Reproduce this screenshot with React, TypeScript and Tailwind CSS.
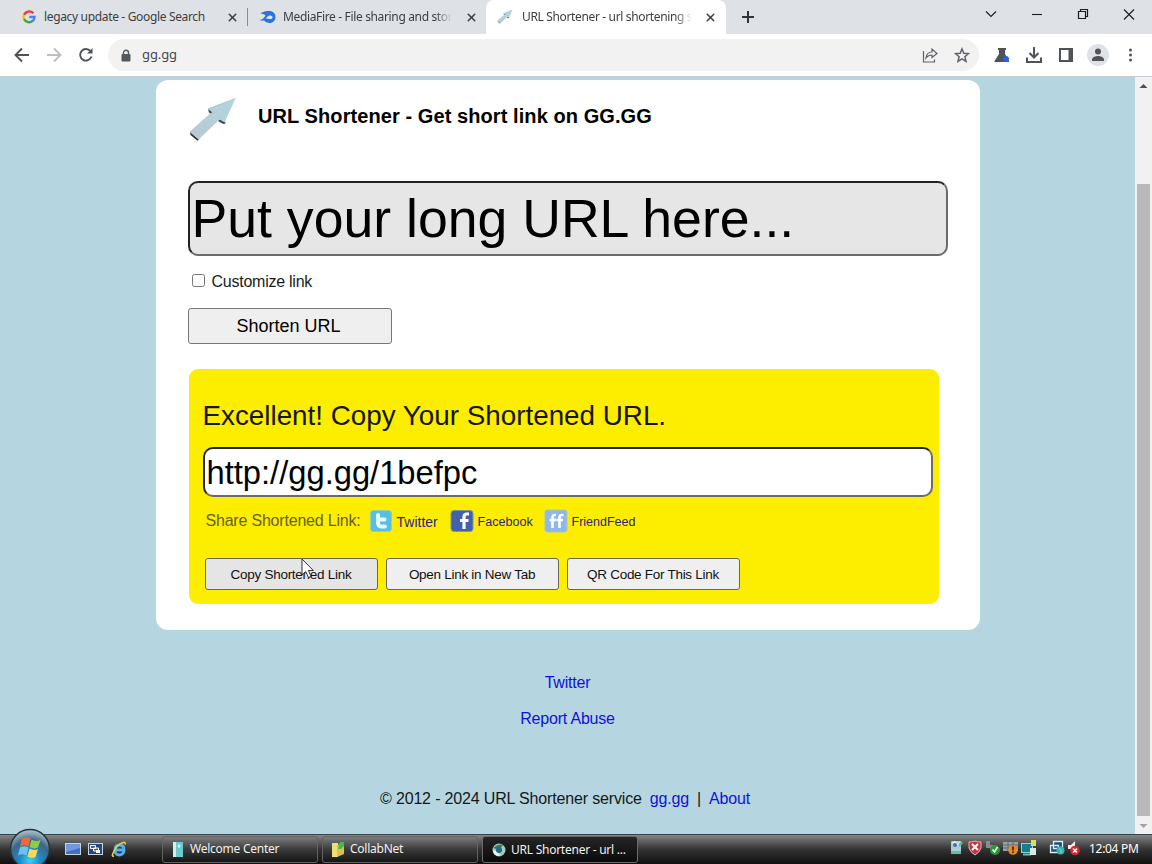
import type { ReactNode } from "react";
import { X } from "lucide-react";

//Google favicon
const GoogleIcon = () => (
  <svg width="14" height="14" viewBox="0 0 48 48" fill="none" strokeWidth="8">
    <path d="M39 11.500A19 19 0 0 0 7 17" stroke="#ea4335" />
    <path d="M7 16A19 19 0 0 0 7 32" stroke="#fbbc05" />
    <path d="M7 31A19 19 0 0 0 37 37" stroke="#34a853" />
    <path d="M36 38A19 19 0 0 0 43 24H25" stroke="#4285f4" />
  </svg>
);

const MediaFireIcon = () => (
  <svg width="17" height="14" viewBox="0 0 17 14">
    <path
      d="M1.500 3.500C4 1.500 7 1 10 1c4 0 6.500 2.500 6.500 6S14 13 10.500 13C8 13 6.500 12 5 10.500c-1.500.3-3 .2-4.500-.8 1.500 0 2.500-.3 3.500-1C5 8 5.500 7 6.500 5.500 5 4 3 3.800 1.500 3.500z"
      fill="#2a74dc"
    />
    <path d="M6.500 8.200c1.500 0 2-2.700 4.700-2.700 1.500 0 2.300.8 2.300 1.700s-.8 1.800-2.300 1.800C9 9 8 8.700 6.500 8.200z" fill="#dee9f8" />
  </svg>
);

const ArrowLogo = ({ size }: { size: number }) => (
  <svg width={size} height={size} viewBox="0 0 49 49">
    <defs>
      <linearGradient id="arrow" x1="0" y1="1" x2="1" y2="0">
        <stop offset="0" stopColor="#b9c9d3" />
        <stop offset="1" stopColor="#b0d6de" />
      </linearGradient>
    </defs>
    <path d="M2 36l9 7.500-1.500 1.200L2.500 39z" fill="#303336" />
    <path d="M20 13l1 3.500 3.500 2.500 1-2zM30 25l5.500 3 2-.5-.5-2.500-5-2z" fill="#3b4146" />
    <path d="M47.500 2.500L20 12.800l4.500 3.200L2 36l8.700 7.500L31.500 23.500l5 3z" fill="url(#arrow)" />
    <path d="M47.500 2.500L20 12.800l4.500 3.200L2 36" fill="none" stroke="#a4b9c4" strokeWidth="0.700" />
  </svg>
);

type TabProps = {
  icon: ReactNode;
  title: string;
  className: string;
  textClass: string;
};

const Tab = ({ icon, title, className, textClass }: TabProps) => (
  <div className={`flex h-[34px] items-center ${className}`}>
    <span className="flex w-[17px] shrink-0 justify-center">{icon}</span>
    <span className={`whitespace-nowrap text-[12px] text-[#3c4043] ${textClass}`}>{title}</span>
    <X className="ml-auto shrink-0 text-[#3c4043]" size={13} strokeWidth={2.8} />
  </div>
);

const TabStrip = () => (
  <div className="flex h-[34px] bg-[#dee1e6] font-['Noto_Sans',sans-serif]">
    <Tab
      icon={<GoogleIcon />}
      title="legacy update - Google Search"
      className="w-[219px] ml-[20px]"
      textClass="ml-[7px] tracking-[-0.34px]"
    />
    <div className="mt-[8px] ml-[8px] h-[18px] w-px bg-[#888c91]" />
    <Tab
      icon={<MediaFireIcon />}
      title="MediaFire - File sharing and stor"
      className="w-[219px] ml-[11px]"
      textClass="ml-[7px] tracking-[-0.35px] mask-r-from-90%"
    />
    <div className="ml-[8px] h-[34px] w-[240px] rounded-t-[8px] bg-white pl-[10px]">
      <Tab
        icon={<ArrowLogo size={16} />}
        title="URL Shortener - url shortening s"
        className="w-[221px]"
        textClass="ml-[9px] tracking-[-0.35px] mask-r-from-90%"
      />
    </div>
    <svg className="mt-[10px] ml-[15px]" width="14" height="14" stroke="#303438" strokeWidth="2">
      <path d="M7 1v12M1 7h12" />
    </svg>
    {/* Window controls */}
    <svg className="ml-auto" width="180" height="34" fill="none" stroke="#1b1b1b" strokeWidth="1.100">
      <path d="M14 11.500l5 5 5-5" />
      <path d="M60 14.500h10" />
      <path d="M106.500 11.500h7v7h-7zM108.500 11.500v-2h7v7h-2" strokeWidth="1.200" />
      <path d="M152 9.500l10 10M162 9.500l-10 10" />
    </svg>
  </div>
);

const Toolbar = () => (
  <div className="flex h-[43px] items-center border-b border-[#c3cdd4] bg-white">
    <svg className="shrink-0" width="108" height="42" fill="none" stroke="#505356" strokeWidth="1.900">
      <path d="M29 21H16M22 14.500L15.500 21l6.500 6.500" />
      <path d="M47 21h13M54 14.500l6.500 6.500-6.500 6.500" stroke="#bdbec0" />
      <path d="M90.500 17.200a5.800 5.800 0 1 0 1 5.300" />
      <path d="M92.500 14v5.500H87z" fill="#505356" stroke="none" />
    </svg>
    <div className="flex h-[32px] w-[871px] items-center rounded-full bg-[#f2f2f3] pl-[13px]">
      <svg width="10" height="13">
        <rect x="0.500" y="5" width="9" height="7.500" rx="1" fill="#55585b" />
        <path d="M2.500 5.500V3.700a2.500 2.500 0 0 1 5 0v1.800" fill="none" stroke="#55585b" strokeWidth="1.400" />
      </svg>
      <span className="ml-[11px] font-['Noto_Sans',sans-serif] text-[13px] tracking-[-0.1px] text-[#45484b]">gg.gg</span>
      <svg className="ml-auto mr-[5px]" width="54" height="20" fill="none" stroke="#5f6368" strokeWidth="1.400">
        <path d="M3.500 6v11h11v-2.500M6 13c.5-4 3-6 6-6V4l5 4.500-5 4V10c-3 0-4.500 1-6 3z" strokeWidth="1.200" />
        <path
          d="M42 4l1.800 4.300 4.600.4-3.500 3 1.100 4.600-4-2.500-4 2.500 1.100-4.600-3.500-3 4.600-.4z"
          strokeWidth="1.500"
        />
      </svg>
    </div>
    <svg className="ml-[7px] shrink-0" width="160" height="42" fill="none" stroke="#505356" strokeWidth="2">
      <path d="M12 14h8v2h-1v4l4 7v1H8.500v-1l4.500-7v-4h-1z" fill="#505356" stroke="none" />
      <circle cx="20" cy="25" r="3" fill="#2463eb" stroke="none" />
      <path d="M48 13v10M43.500 19l4.500 4.500 4.500-4.500M41 23.500V28h14v-4.500" />
      <path d="M74 15h12v12H74z" />
      <path d="M84 15v12" strokeWidth="3" />
      <circle cx="112" cy="21" r="11" fill="#dfe2e7" stroke="none" />
      <circle cx="112" cy="17.500" r="3" fill="#505356" stroke="none" />
      <path d="M106 27v-1.500c0-2.500 4-3.500 6-3.500s6 1 6 3.500V27z" fill="#505356" stroke="none" />
      <g fill="#505356" stroke="none">
        <circle cx="144.500" cy="16" r="1.500" />
        <circle cx="144.500" cy="21" r="1.500" />
        <circle cx="144.500" cy="26" r="1.500" />
      </g>
    </svg>
  </div>
);

type ShareProps = { icon: ReactNode; label: string; className: string };

const ShareLink = ({ icon, label, className }: ShareProps) => (
  <a className={`flex items-center text-[#33208c] ${className}`}>
    {icon}
    <span className="ml-[4px] pt-[2px] whitespace-nowrap">{label}</span>
  </a>
);

const ShareRow = () => (
  <div className="mt-[12px] flex h-[24px] items-center pl-[3px]">
    <span className="w-[163px] whitespace-nowrap text-[16px] tracking-[-0.2px] text-[#685f18]">Share Shortened Link:</span>
    <ShareLink
      label="Twitter"
      className="w-[81px] text-[14px]"
      icon={
        <svg width="24" height="24">
          <rect x="1.500" y="1.500" width="21" height="21" rx="3" fill="#58bfe0" stroke="#96cdb4" />
          <path d="M9 6v8q0 3.500 3.500 3.500H16M9 10.500h6.500" stroke="#e9fbff" strokeWidth="3.800" fill="none" strokeLinecap="round" />
        </svg>
      }
    />
    <ShareLink
      label="Facebook"
      className="w-[94px] text-[12.6px]"
      icon={
        <svg width="24" height="24">
          <rect x="1" y="1.500" width="22" height="21" rx="3" fill="#4263a9" stroke="#8294a1" />
          <path d="M19 5h-2q-3 0-3 3v12M10 11.500h8.500" stroke="#fff" strokeWidth="3.200" fill="none" />
        </svg>
      }
    />
    <ShareLink
      label="FriendFeed"
      className="text-[12.5px]"
      icon={
        <svg width="24" height="24">
          <rect x="1" y="1" width="22" height="22" rx="2" fill="#8db9ea" stroke="#a8c5c5" />
          <path d="M12 6H10.500Q8.500 6 8.500 8.500V19M5.500 11H12M19.500 6H18q-2.500 0-2.500 2.500V19M12.500 11h6.500" stroke="#fff" strokeWidth="2.600" fill="none" />
        </svg>
      }
    />
  </div>
);

const actions = ["Copy Shortened Link", "Open Link in New Tab", "QR Code For This Link"];

const ResultBox = () => (
  <div className="mt-[25px] ml-px h-[235px] w-[750px] rounded-[9px] bg-[#fdee00] pl-[14px]">
    <h2 className="pt-[30px] text-[27.800px] leading-[34px] text-[#17160a]">Excellent! Copy Your Shortened URL.</h2>
    <input
      className="mt-[14px] block h-[50px] w-[730px] rounded-[10px] border-2 border-t-[#222] border-r-[#6b6b6b] border-b-[#6b6b6b] border-l-[#222] bg-white px-[2px] pt-[2px] text-[32.700px] text-black"
      defaultValue="http://gg.gg/1befpc"
    />
    <ShareRow />
    <div className="mt-[25px] flex gap-[8px] pl-[2px]">
      {actions.map((label, index) => (
        <button
          key={label}
          className={`relative h-[32px] w-[173px] rounded-[3px] border border-[#6a6660] pt-[2px] text-[13.500px] tracking-[-0.28px] text-[#111] ${index === 0 ? "bg-[#e5e5e5]" : "bg-[#efefef]"}`}
        >
          {label}
          {/* Mouse pointer over the copy button */}
          {index === 0 && (
            <svg className="absolute top-[-1px] left-[95px]" width="14" height="21" viewBox="0 0 14 21">
              <path d="M1 1v16l3.700-3.500L7.500 19.500l2.500-1-2.600-6h5z" fill="#fff" stroke="#333" />
            </svg>
          )}
        </button>
      ))}
    </div>
  </div>
);

const Page = () => (
  <div className="flex h-[757px] bg-[#b5d6e0] font-['Liberation_Sans',Arial,sans-serif]">
    <main className="flex w-[1135px] flex-col items-center pt-[3px]">
      <div className="h-[550px] w-[824px] rounded-[12px] bg-white pl-[32px]">
        <div className="flex h-[101px] items-start">
          <div className="pt-[16px]">
            <ArrowLogo size={49} />
          </div>
          <h1 className="mt-[22px] ml-[21.500px] whitespace-nowrap text-[20px] leading-[28px] font-bold tracking-[0.080px] text-black">
            URL Shortener - Get short link on GG.GG
          </h1>
        </div>
        <input
          className="block h-[75px] w-[760px] rounded-[10px] border-2 border-t-[#222] border-r-[#6b6b6b] border-b-[#6b6b6b] border-l-[#222] bg-[#e6e6e6] px-[2px] text-[53.600px] text-black"
          defaultValue="Put your long URL here..."
        />
        <label className="mt-[15px] flex h-[20px] items-center pl-[4px]">
          <span className="-mt-px h-[13px] w-[13px] rounded-[2.5px] border border-[#767676] bg-white" />
          <span className="ml-[7px] pt-[2px] text-[16px] tracking-[-0.25px] text-[#1b1b1b]">Customize link</span>
        </label>
        <button className="mt-[17px] block h-[36px] w-[204px] rounded-[3px] border border-[#767676] bg-[#efefef] pt-px pr-[2px] text-[18px] text-black">
          Shorten URL
        </button>
        <ResultBox />
      </div>
      <footer className="flex w-full flex-col items-center text-[16px] leading-[20px] tracking-[-0.2px] text-[#14171a]">
        <a className="mt-[43px] text-[#1010dd]">Twitter</a>
        <a className="mt-[16px] text-[#1010dd]">Report Abuse</a>
        <p className="mt-[60px] flex pr-[5px] tracking-[-0.160px]">
          © 2012 - 2024 URL Shortener service
          <a className="ml-[8px] text-[#1010dd]">gg.gg</a>
          <span className="mx-[8px]">|</span>
          <a className="text-[#1010dd]">About</a>
        </p>
      </footer>
    </main>
    {/* Scrollbar */}
    <div className="flex w-[17px] flex-col items-center bg-[#f1f1f1]">
      <svg width="17" height="17">
        <path d="M4.500 11h8L8.500 7z" fill="#505050" />
      </svg>
      <div className="mt-[90px] h-[632px] w-[13px] bg-[#b9b9b9]" />
      <svg className="mt-px" width="17" height="17">
        <path d="M4.500 7h8l-4 4z" fill="#a3a3a3" />
      </svg>
    </div>
  </div>
);

const StartOrb = () => (
  <svg className="absolute bottom-0 left-[8px]" width="44" height="36">
    <defs>
      <radialGradient id="orb" cx="0.5" cy="0.8" r="0.75">
        <stop offset="0" stopColor="#3fd0f6" />
        <stop offset="0.35" stopColor="#2189c4" />
        <stop offset="0.7" stopColor="#3b6687" />
        <stop offset="1" stopColor="#a3b9c4" />
      </radialGradient>
    </defs>
    <circle cx="22" cy="21" r="19.500" fill="url(#orb)" stroke="#24313a" strokeWidth="1.500" />
    <path d="M14 10.500q4.500-2.500 8.500 0l-2 8q-4-2.500-8.500 0z" fill="#ed6a3a" />
    <path d="M23.500 11.500q4 2.500 9 .5l-2.500 7.500q-4 2-8.500-.5z" fill="#92c94a" />
    <path d="M12 19.500q4.500-2.500 8.500 0l-2 8q-4-2.500-8.500 0z" fill="#6fc2f0" />
    <path d="M21.500 20.500q4.500 2.500 8.500.5l-2.500 8q-4 2-8-.5z" fill="#fad85a" />
  </svg>
);

const TaskButton = ({ icon, label, active }: { icon: ReactNode; label: string; active?: boolean }) => (
  <div
    className={`flex h-[27px] w-[156px] items-center rounded-[3px] border pl-[8px] text-[12px] tracking-[-0.25px] text-[#f0f0f0] ${
      active
        ? "border-[#6b6b6b] bg-linear-to-b from-[#252525] to-[#0b0b0b] pt-[1px]"
        : "border-[#626262] bg-linear-to-b from-[#7c7c7c] via-[#3b3b3b] via-50% to-[#151515] pb-[1px]"
    }`}
  >
    {icon}
    <span className="ml-[4px] whitespace-nowrap">{label}</span>
  </div>
);

const QuickLaunch = () => (
  <svg className="shrink-0" width="74" height="29">
    <rect x="4.500" y="8.500" width="15" height="11" fill="#426fc2" stroke="#c3d2dd" />
    <path d="M5 9h14v4L5 17z" fill="#6f9ae0" />
    <rect x="27.500" y="8.500" width="14" height="11" fill="#25477c" stroke="#c6d5e2" />
    <path d="M29.500 10.500h5v3h-5zM32.500 13h5v3h-5z" fill="#315a91" stroke="#fff" />
    <path d="M35 15h4v3h-4z" fill="#fff" />
    <path d="M63 16.500q-1.500 3.500-4.500 3.500-4.500 0-4.500-5t4.500-5 4.500 5h-8" fill="none" stroke="#4fb2ee" strokeWidth="2.800" />
    <path d="M53 21q-3 1-.5-4Q56 9.500 62 7.500q3-.5 2 2" fill="none" stroke="#e5cf4a" strokeWidth="1.600" />
  </svg>
);

const Tray = () => (
  <svg className="ml-auto shrink-0" width="134" height="29">
    {/* Removable hardware */}
    <rect x="5" y="6" width="10" height="13" rx="1" fill="#a8d0d8" />
    <path d="M6.500 8.500q2-3 4 0t4-2" stroke="#eef6c8" strokeWidth="1.500" fill="none" />
    <circle cx="9" cy="10" r="2" fill="#3f6fc4" />
    <path d="M5 17.500h10M13 11l3-4" stroke="#62b99a" strokeWidth="2.500" />
    {/* Security alert */}
    <path d="M23 7q4 0 6-1 2 1 6 1v6q-1 4-6 7-5-3-6-7z" fill="#ca3440" stroke="#dab7b7" />
    <path d="M26 9l6 6M32 9l-6 6" stroke="#fff" strokeWidth="2" />
    {/* Virtual machine tools */}
    <path d="M40 6h4v7h-4zM44 10h5v4h-5z" fill="#858c8e" />
    <circle cx="49" cy="15" r="5" fill="#239c32" />
    <path d="M46.500 14.500l2 2.500 3-5" stroke="#fff" strokeWidth="1.500" fill="none" />
    {/* Firewall */}
    <path d="M57 7h15v9H57z" fill="#9aa2a9" />
    <path d="M57 10h15M57 13h15M62 7v9M67 7v9" stroke="#5f676e" />
    <circle cx="67" cy="15" r="4.800" fill="#e78b24" />
    <path d="M67 11.500v4M67 16.500v1.500" stroke="#4e280b" strokeWidth="1.800" />
    <rect x="75.500" y="8.500" width="11" height="9" fill="#167f8c" stroke="#8ed4cb" />
    <path d="M77 19.500h8" stroke="#6cc0b8" strokeWidth="2" />
    <path d="M85 5h5v6h-5z" fill="#d6e163" />
    <path d="M84 13h6v7h-6z" fill="#d9e8df" />
    {/* Network */}
    <path d="M107.500 6.500h9v7h-9zM104.500 10.500h8v7h-8z" fill="#17507e" stroke="#d8eef5" strokeWidth="1.300" />
    <circle cx="114.500" cy="15.500" r="4" fill="#35b4b0" />
    <path d="M113 13.500q3 1 2 5" stroke="#8fe0a0" fill="none" />
    {/* Muted volume */}
    <path d="M122 10h3l4-4v12l-4-4h-3z" fill="#eee" />
    <circle cx="129" cy="15.500" r="4.800" fill="#cf2936" />
    <path d="M127 13.500l4 4M131 13.500l-4 4" stroke="#fff" strokeWidth="1.500" />
  </svg>
);

const Taskbar = () => (
  <div className="relative flex h-[30px] items-center border-t border-[#36434a] bg-linear-to-b from-[#858585] via-[#333] via-50% to-[#101010] pl-[61px] font-['Noto_Sans',sans-serif]">
    <StartOrb />
    <QuickLaunch />
    <div className="ml-[27px] flex gap-[4px]">
      <TaskButton
        label="Welcome Center"
        icon={
          <svg width="15" height="17">
            <path d="M2 1h10v15H2z" fill="#6cc9ce" />
            <path d="M2 1h3v15H2z" fill="#d5eeef" />
            <path d="M8 3v4M6.500 5h3" stroke="#e6ffff" />
          </svg>
        }
      />
      <TaskButton
        label="CollabNet"
        icon={
          <svg width="15" height="17">
            <path d="M1 2h6v14H1z" fill="#eede77" />
            <path d="M6 4l7-2v11l-7 3z" fill="#e0bf48" />
            <path d="M9 1h4v4l-3 3H7z" fill="#43bb4c" />
          </svg>
        }
      />
      <TaskButton
        active
        label="URL Shortener - url ..."
        icon={
          <svg width="16" height="16">
            <circle cx="8" cy="8" r="6.500" fill="#a7cbb8" />
            <path d="M2 6q5-5 10-3L8 8z" fill="#337b5a" />
            <path d="M2 8q0 6 7 6l-2-4z" fill="#eef5f1" />
            <circle cx="8" cy="8" r="3" fill="#1d6a94" />
          </svg>
        }
      />
    </div>
    <Tray />
    <span className="mr-[13px] ml-[9px] w-[50px] whitespace-nowrap pb-[2px] text-[12px] tracking-[-0.3px] text-white">12:04 PM</span>
  </div>
);

export default function App() {
  return (
    <div className="h-[864px] w-[1152px] overflow-hidden">
      <TabStrip />
      <Toolbar />
      <Page />
      <Taskbar />
    </div>
  );
}
